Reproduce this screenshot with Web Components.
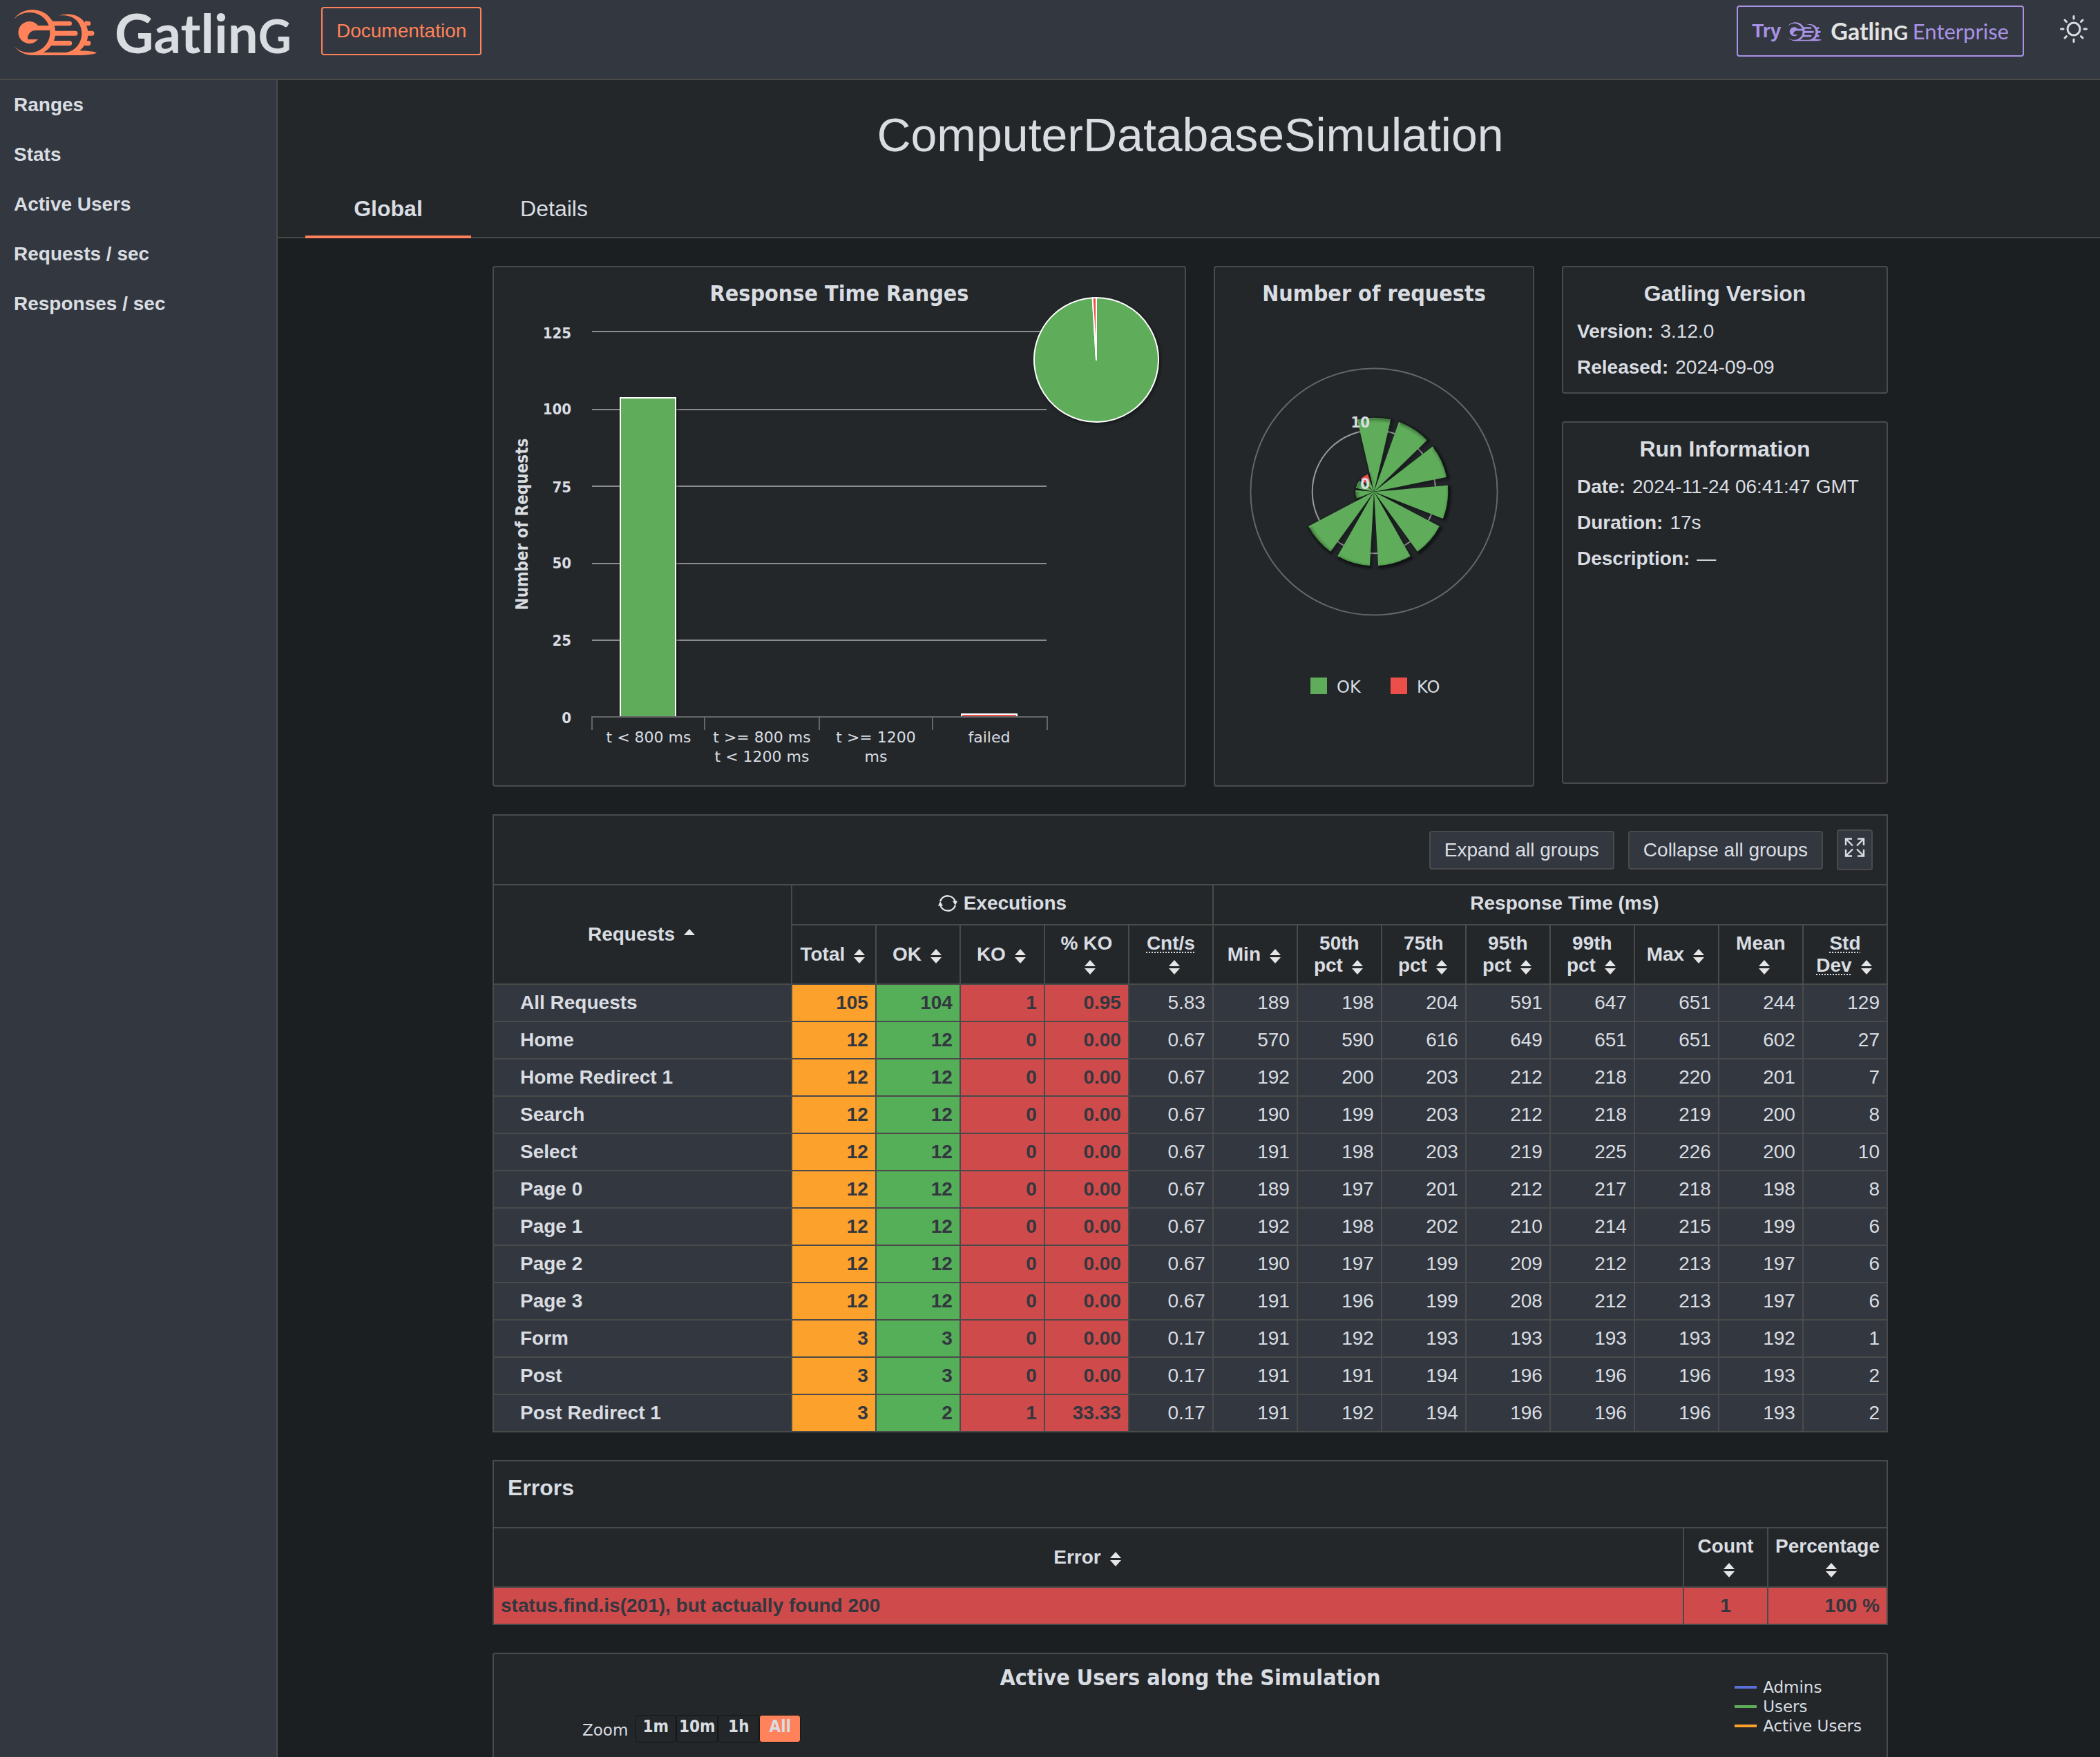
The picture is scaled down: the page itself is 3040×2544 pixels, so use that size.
<!DOCTYPE html>
<html lang="en">
<head>
<meta charset="utf-8">
<title>Gatling Stats - Global Information</title>
<style>
:root{
  --bar:#33373f; --panel:#23272a; --page:#1c1f22; --line:#4a4a4a; --text:#d9dde2;
  --accent:#ff825a; --purple:#a993e6; --ok:#5fad5a; --ko:#ec4f49;
  --cell-total:#fca12c; --cell-ok:#55ae58; --cell-ko:#cf4a4a; --cell-ink:#33373f;
  --chart-bold:"DejaVu Sans Condensed","Noto Sans",sans-serif;
  --chart:"DejaVu Sans",sans-serif;
}
html,body{margin:0;background:var(--page)}
body{font-family:"Liberation Sans",Arial,sans-serif;font-size:28px;line-height:32px;color:var(--text)}
</style>
</head>
<body>
<gl-app></gl-app>
<script>
const define = (name, html, ready) => customElements.define(name, class extends HTMLElement {
  connectedCallback() {
    if (this.shadowRoot) return;
    const root = this.attachShadow({ mode: 'open' });
    root.innerHTML = typeof html === 'function' ? html(this) : html;
    if (ready) ready(this, root);
  }
});

/* ---------- brand ---------- */
define('gl-mark', `
<style>:host{display:block;color:var(--accent)} svg{display:block;width:100%;height:100%}</style>
<svg viewBox="60 30 366 210" fill="currentColor" aria-hidden="true">
  <path d="M61 84C76 58 106 42 142 42A99 99 0 0 1 142 240C110 240 80 226 62 202C80 220 102 229 130 229A87 87 0 0 0 130 54C102 54 78 64 61 84Z"/>
  <path d="M165 111A48 48 0 1 0 165 171H120C120 149 132 132 155 132H225V111Z"/>
  <path d="M222 92H302a10 10 0 0 1 0 20H222ZM222 134H327a10 10 0 0 1 0 21H222ZM222 177H302a10 10 0 0 1 0 21H222Z"/>
  <path d="M256 68C300 52 352 64 372 106C394 146 380 196 345 220C375 221 410 223 420 230C405 237 370 240 320 240H140L165 228H285C330 222 355 184 355 144C354 92 312 60 256 68Z"/>
  <path d="M368 92H384a10 10 0 0 1 0 20H368ZM375 134H399a10 10 0 0 1 0 21H375ZM368 177H384a10 10 0 0 1 0 21H368Z"/>
</svg>`);

define('gl-wordmark', `
<style>
:host{display:block;font-family:Lato,sans-serif;font-weight:700;white-space:nowrap}
.g{font-size:.85em;line-height:1;text-transform:uppercase}
</style><span>Gatlin<span class="g">g</span></span>`);

/* ---------- header ---------- */
define('gl-header', `
<style>
:host{display:block;background:var(--bar);border-bottom:2px solid var(--line)}
header{display:flex;align-items:center;height:90px;padding:0 18px 24px 20px}
a{color:inherit;text-decoration:none}
.logo{display:flex;align-items:center;gap:24px;margin-right:38px}
.logo gl-mark{width:122px;height:70px}
.logo gl-wordmark{font-size:78px;line-height:84px;width:261px;padding-top:4px}
.doc{border:2px solid var(--accent);border-radius:4px;color:var(--accent);padding:17px 20px}
.ent{margin-left:auto;display:flex;align-items:center;border:2px solid var(--purple);border-radius:4px;padding:15px 20px;height:40px;color:var(--purple)}
.ent b{margin-right:10px}
.ent gl-mark{width:50px;height:30px;color:var(--purple);margin-right:12px}
.ent gl-wordmark{font-size:34px;line-height:40px;color:#e3e3e3;margin-right:7px}
.ent .e{font:400 31px/40px Lato,sans-serif}
button{background:none;border:0;padding:0 0 6px;margin-left:52px;color:inherit;height:46px}
button svg{display:block}
</style>
<header>
  <a class="logo" href="#" aria-label="Gatling"><gl-mark></gl-mark><gl-wordmark></gl-wordmark></a>
  <a class="doc" href="#">Documentation</a>
  <a class="ent" href="#"><b>Try</b><gl-mark></gl-mark><gl-wordmark></gl-wordmark><span class="e">Enterprise</span></a>
  <button aria-label="Toggle theme"><svg width="40" height="40" viewBox="-20 -20 40 40" fill="none" stroke="currentColor" stroke-width="3" stroke-linecap="round"><circle r="9"/><path d="M0-18.500V-15M0 18.500V15M-18.500 0H-15M18.500 0H15M-13-13l2.500 2.500M13 13l-2.500-2.500M13-13l-2.500 2.500M-13 13l2.500-2.500"/></svg></button>
</header>`);

/* ---------- navigation ---------- */
define('gl-sidebar', `
<style>
:host{display:block;background:var(--bar);border-right:2px solid var(--line)}
nav{display:flex;flex-direction:column}
::slotted(a){display:block;padding:20px;color:inherit;font-weight:700;text-decoration:none}
</style><nav><slot></slot></nav>`);

define('gl-tabs', `
<style>
:host{display:block;background:var(--panel);border-bottom:2px solid var(--line)}
h1{margin:0;padding:37px 0 0 4px;font-size:68px;font-weight:400;line-height:84px;text-align:center}
nav{display:flex;padding:20px 40px 0;margin-bottom:-2px}
a{width:240px;box-sizing:border-box;text-align:center;color:inherit;text-decoration:none;font-size:32px;line-height:36px;padding:27px 0 21px;border-bottom:4px solid transparent}
a.on{font-weight:700;border-color:var(--accent)}
</style>
<h1><slot></slot></h1>
<nav><a class="on" href="#">Global</a><a href="#">Details</a></nav>`);

/* ---------- cards ---------- */
define('gl-card', `
<style>:host{display:block;background:var(--panel);border:2px solid var(--line);border-radius:4px;box-sizing:border-box}</style><slot></slot>`);

define('gl-info', el => `
<style>
:host{display:block;padding:20px 20px 10px}
h2{margin:0 0 11px;font-size:32px;line-height:36px;text-align:center}
dl{margin:0} div{display:flex;gap:10px;line-height:52px} dt{font-weight:700} dd{margin:0}
</style>
<h2>${el.getAttribute('heading')}</h2>
<dl>${el.getAttribute('items').split('|').map(s => { const [k, v] = s.split('='); return `<div><dt>${k}:</dt><dd>${v}</dd></div>`; }).join('')}</dl>`);

/* three stacked strokes make the soft outline behind a shape */
const halo = d => [[10, .05], [6, .1], [2, .15]].map(([w, o]) =>
  `<path d="${d}" fill="none" stroke="#000" stroke-width="${w}" stroke-opacity="${o}" transform="translate(2 2)"/>`).join('');

const chartCss = `
:host{display:block} svg{display:block;width:100%;height:auto}
text{fill:var(--text)}
.t{font:700 32px var(--chart-bold);text-anchor:middle}
.b{font:700 22px var(--chart-bold);text-anchor:end}
.a{font:700 24px var(--chart-bold);text-anchor:middle}
.c{font:400 22px var(--chart);text-anchor:middle}
.l{font:400 24px var(--chart)}`;

define('gl-ranges-chart', () => {
  const ys = [93, 206, 317, 429, 540], base = [103, 213, 326, 436, 548, 660];
  const cx = 872, cy = 134, r = 90, a = -Math.PI * 2 / 105;
  const px = cx + r * Math.sin(a), py = cy - r * Math.cos(a);
  const ok = `M${cx} ${cy}V${cy - r}A${r} ${r} 0 1 1 ${px} ${py}Z`;
  const ko = `M${cx} ${cy}L${px} ${py}A${r} ${r} 0 0 1 ${cx} ${cy - r}Z`;
  return `<style>${chartCss}</style>
<svg viewBox="0 0 1000 750" role="img" aria-label="Response Time Ranges">
  <g stroke="#8c8c8c" stroke-width="2">${ys.map(y => `<path d="M142 ${y}H800"/>`).join('')}</g>
  ${halo('M183 651V189H263V651')}
  <rect x="183" y="189" width="80" height="464" fill="var(--ok)" stroke="#fff" stroke-width="2"/>
  <rect x="677" y="647" width="80" height="6" fill="var(--ko)" stroke="#fff" stroke-width="2"/>
  <rect x="140" y="652" width="664" height="4" fill="var(--panel)"/>
  <path d="M141 651H802M142 651V670M305 651V670M471 651V670M635 651V670M801 651V670" fill="none" stroke="#666" stroke-width="2"/>
  ${['125', '100', '75', '50', '25', '0'].map((t, i) => `<text class="b" x="112" y="${base[i]}">${t}</text>`).join('')}
  <text class="a" transform="translate(49 372) rotate(-90)">Number of Requests</text>
  <text class="c" x="224" y="688">t &lt; 800 ms</text>
  <text class="c" x="388" y="688">t &gt;= 800 ms</text><text class="c" x="388" y="716">t &lt; 1200 ms</text>
  <text class="c" x="553" y="688">t &gt;= 1200</text><text class="c" x="553" y="716">ms</text>
  <text class="c" x="717" y="688">failed</text>
  ${halo(ok)}
  <path d="${ok}" fill="var(--ok)" stroke="#fff" stroke-width="2" stroke-linejoin="round"/>
  <path d="${ko}" fill="var(--ko)" stroke="#fff" stroke-width="2" stroke-linejoin="round"/>
  <text class="t" x="500" y="49">Response Time Ranges</text>
</svg>`;
});

define('gl-polar-chart', () => {
  const cx = 230, cy = 325, unit = 8.93, step = Math.PI * 2 / 11, half = step * .4;
  const ok = [12, 12, 12, 12, 12, 12, 12, 12, 3, 3, 2], ko = [0, 0, 0, 0, 0, 0, 0, 0, 0, 0, 1];
  const pt = (r, a) => `${(cx + r * Math.sin(a)).toFixed(2)} ${(cy - r * Math.cos(a)).toFixed(2)}`;
  const sector = (i, from, to) => {
    const a = i * step - half, b = i * step + half, r0 = from * unit, r1 = to * unit;
    return `M${pt(r1, a)}A${r1} ${r1} 0 0 1 ${pt(r1, b)}L${pt(r0, b)}` + (r0 ? `A${r0} ${r0} 0 0 0 ${pt(r0, a)}Z` : 'Z');
  };
  const oks = ok.map((v, i) => sector(i, 0, v)), kos = ko.map((v, i) => sector(i, ok[i], ok[i] + v));
  return `<style>${chartCss}</style>
<svg viewBox="0 0 460 750" role="img" aria-label="Number of requests">
  <circle cx="${cx}" cy="${cy}" r="89.3" fill="none" stroke="#999" stroke-width="2"/>
  <circle cx="${cx}" cy="${cy}" r="178.600" fill="none" stroke="#666" stroke-width="2"/>
  ${oks.map(d => halo(d)).join('')}${oks.map(d => `<path d="${d}" fill="var(--ok)"/>`).join('')}
  ${kos.map(d => halo(d)).join('')}${kos.map((d, i) => ko[i] ? `<path d="${d}" fill="var(--ko)"/>` : '').join('')}
  <text class="b" x="224" y="232">10</text><text class="b" x="224" y="321">0</text>
  <rect x="138" y="594" width="24" height="24" fill="var(--ok)"/><text class="l" x="176" y="616">OK</text>
  <rect x="254" y="594" width="24" height="24" fill="var(--ko)"/><text class="l" x="292" y="616">KO</text>
  <text class="t" x="230" y="49">Number of requests</text>
</svg>`;
});

/* ---------- tables ---------- */
const sorter = cls => `<wbr><svg class="s ${cls || ''}" width="16" height="22" viewBox="0 0 16 22"><path d="M8 0L16 9H0Z"/><path class="d" d="M0 12H16L8 21Z"/></svg>`;
const tableCss = `
table{width:100%;table-layout:fixed;border-collapse:separate;border-spacing:0;border-left:2px solid var(--line);box-sizing:border-box}
th,td{padding:10px;border:0 solid var(--line);border-width:0 2px 2px 0}
th{background:var(--panel)}
th a{color:inherit;text-decoration:none}
.s{margin:0 3px 0 13px;vertical-align:-5px;fill:#e6e6e6}
.up .d{display:none}
.abbr{text-decoration:underline dotted 2px;text-underline-offset:3px}
td{background:var(--bar);text-align:right}
td.ko{background:var(--cell-ko);color:var(--cell-ink);font-weight:700}`;

define('gl-stats', () => {
  const rows = `All Requests,105,104,1,0.95,5.83,189,198,204,591,647,651,244,129
Home,12,12,0,0.00,0.67,570,590,616,649,651,651,602,27
Home Redirect 1,12,12,0,0.00,0.67,192,200,203,212,218,220,201,7
Search,12,12,0,0.00,0.67,190,199,203,212,218,219,200,8
Select,12,12,0,0.00,0.67,191,198,203,219,225,226,200,10
Page 0,12,12,0,0.00,0.67,189,197,201,212,217,218,198,8
Page 1,12,12,0,0.00,0.67,192,198,202,210,214,215,199,6
Page 2,12,12,0,0.00,0.67,190,197,199,209,212,213,197,6
Page 3,12,12,0,0.00,0.67,191,196,199,208,212,213,197,6
Form,3,3,0,0.00,0.17,191,192,193,193,193,193,192,1
Post,3,3,0,0.00,0.17,191,191,194,196,196,196,193,2
Post Redirect 1,3,2,1,33.33,0.17,191,192,194,196,196,196,193,2`.split('\n').map(r => r.split(','));
  const kind = ['name', 'total', 'ok', 'ko', 'ko'];
  const heads = ['Total', 'OK', 'KO', '% KO', 'Cnt/s', 'Min', '50th pct', '75th pct', '95th pct', '99th pct', 'Max', 'Mean', 'Std Dev'];
  return `<style>
:host{display:block}
.bar{display:flex;justify-content:flex-end;align-items:center;gap:20px;height:99px;padding:0 20px;background:var(--panel);border:2px solid var(--line);border-bottom:0}
button{font:inherit;color:inherit;background:var(--bar);border:2px solid var(--line);border-radius:4px;padding:10px 20px;white-space:nowrap}
button.f{padding:10px 9px 17px}
button svg{display:block}
${tableCss}
table{border-top:2px solid var(--line)}
.group th{padding:10px 10px 14px;vertical-align:top}
.group th[rowspan]{vertical-align:middle;padding:10px}
.group th.rt{padding-left:52px}
.x{display:flex;justify-content:center;align-items:center;gap:9px}
td.name{text-align:left;font-weight:700;padding-left:38px}
td.total{background:var(--cell-total);color:var(--cell-ink);font-weight:700}
td.ok{background:var(--cell-ok);color:var(--cell-ink);font-weight:700}
</style>
<div class="bar"><button>Expand all groups</button><button>Collapse all groups</button>
<button class="f" aria-label="Full screen"><svg width="30" height="28" viewBox="0 0 30 28" fill="none" stroke="currentColor" stroke-width="2.400"><path d="M2 11V1.500H11M2 1.500L12 11.500M19 1.500H28V11M28 1.500L18 11.500M2 17V26.500H11M2 26.500L12 16.500M28 17V26.500H19M28 26.500L18 16.500"/></svg></button></div>
<table>
<colgroup><col>${'<col style="width:122px">'.repeat(13)}</colgroup>
<thead>
<tr class="group"><th rowspan="2"><a href="#">Requests${sorter('up')}</a></th>
<th colspan="5"><span class="x"><svg width="28" height="28" viewBox="0 0 28 28" fill="none" stroke="#e6e6e6" stroke-width="2.400"><path d="M3 11A11.500 11.500 0 0 1 25 12M25 17A11.500 11.500 0 0 1 3 16"/><path d="M21 10.500H28L25 17ZM0 17.500H7L3 11Z" fill="#e6e6e6" stroke="none"/></svg>Executions</span></th>
<th class="rt" colspan="8">Response Time (ms)</th></tr>
<tr>${heads.map(h => `<th><a href="#"><span class="${/Cnt|Std/.test(h) ? 'abbr' : ''}">${h.replace('% KO', '%&nbsp;KO')}</span>${sorter()}</a></th>`).join('')}</tr>
</thead>
<tbody>${rows.map(r => `<tr>${r.map((v, i) => `<td class="${kind[i] || ''}">${v}</td>`).join('')}</tr>`).join('')}</tbody>
</table>`;
});

define('gl-errors', `
<style>
:host{display:block}
h2{margin:0;padding:20px 20px 39px;font-size:32px;line-height:36px;background:var(--panel);border:2px solid var(--line)}
${tableCss}
td{font-weight:700}
td:first-child{text-align:left} td:nth-child(2){text-align:center}
</style>
<h2>Errors</h2>
<table><colgroup><col><col style="width:122px"><col style="width:173px"></colgroup>
<thead><tr><th><a href="#">Error${sorter()}</a></th><th><a href="#">Count${sorter()}</a></th><th><a href="#">Percentage${sorter()}</a></th></tr></thead>
<tbody><tr><td class="ko">status.find.is(201), but actually found 200</td><td class="ko">1</td><td class="ko">100 %</td></tr></tbody></table>`);

/* ---------- active users chart ---------- */
define('gl-users-chart', `
<style>
:host{display:grid;grid-template-columns:1fr auto 1fr;align-content:start;min-height:800px}
h2{grid-column:2;margin:0;padding-top:16px;font:700 32px/36px var(--chart-bold)}
.zoom{grid-column:1;grid-row:1;display:flex;align-items:flex-start;padding:88px 0 0 128px;font:400 23px/28px var(--chart)}
.zoom span{padding:8px 10px 0 0}
button{box-sizing:border-box;width:60px;height:40px;padding:0 0 6px;border:1px solid #141618;border-radius:4px;background:none;color:inherit;font:700 24px/28px var(--chart-bold);text-align:center}
button.on{background:var(--accent)}
ul{grid-column:3;grid-row:1;justify-self:end;list-style:none;margin:0;padding:34px 36px 0 0;font:400 23px/28px var(--chart)}
li{display:flex;align-items:center;gap:9px}
i{width:32px;height:4px}
</style>
<div class="zoom"><span>Zoom</span><button>1m</button><button>10m</button><button>1h</button><button class="on">All</button></div>
<h2>Active Users along the Simulation</h2>
<ul><li><i style="background:#5b6fd8"></i>Admins</li><li><i style="background:var(--ok)"></i>Users</li><li><i style="background:var(--cell-total)"></i>Active Users</li></ul>`);

/* ---------- page ---------- */
define('gl-app', `
<style>
:host{display:grid;grid-template:auto 1fr / 402px 1fr;height:100vh}
gl-header{grid-column:1 / 3}
gl-sidebar{box-sizing:border-box}
main{overflow-y:auto;scrollbar-width:none}
.page{max-width:2020px;margin:0 auto;display:grid;gap:40px}
.wrap{padding:40px 40px 0 44px}
.top{display:grid;grid-template-columns:1004fr 464fr 472fr;gap:40px}
.side{display:flex;flex-direction:column;gap:40px;padding-bottom:4px}
.side gl-card:last-child{flex:1}
</style>
<gl-header></gl-header>
<gl-sidebar><a href="#">Ranges</a><a href="#">Stats</a><a href="#">Active Users</a><a href="#">Requests / sec</a><a href="#">Responses / sec</a></gl-sidebar>
<main>
  <gl-tabs>ComputerDatabaseSimulation</gl-tabs>
  <div class="wrap"><div class="page">
    <div class="top">
      <gl-card><gl-ranges-chart></gl-ranges-chart></gl-card>
      <gl-card><gl-polar-chart></gl-polar-chart></gl-card>
      <div class="side">
        <gl-card><gl-info heading="Gatling Version" items="Version=3.12.0|Released=2024-09-09"></gl-info></gl-card>
        <gl-card><gl-info heading="Run Information" items="Date=2024-11-24 06:41:47 GMT|Duration=17s|Description=—"></gl-info></gl-card>
      </div>
    </div>
    <gl-stats></gl-stats>
    <gl-errors></gl-errors>
    <gl-card><gl-users-chart></gl-users-chart></gl-card>
  </div></div>
</main>`);
</script>
</body>
</html>
